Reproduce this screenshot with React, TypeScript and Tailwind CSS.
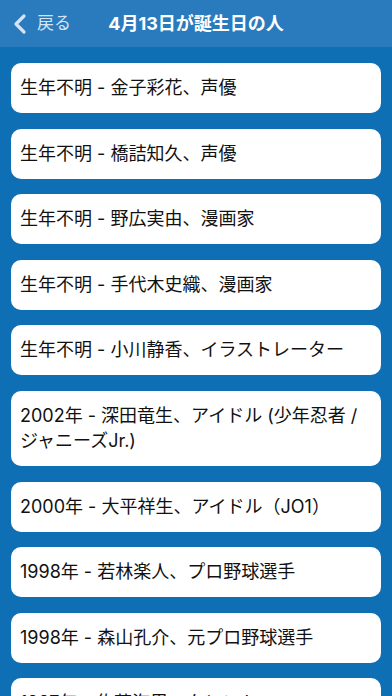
import { ChevronLeft } from 'lucide-react'

const PEOPLE = [
  ['生年不明 - 金子彩花、声優'],
  ['生年不明 - 橋詰知久、声優'],
  ['生年不明 - 野広実由、漫画家'],
  ['生年不明 - 手代木史織、漫画家'],
  ['生年不明 - 小川静香、イラストレーター'],
  ['2002年 - 深田竜生、アイドル (少年忍者 /', 'ジャニーズJr.)'],
  ['2000年 - 大平祥生、アイドル（JO1）'],
  ['1998年 - 若林楽人、プロ野球選手'],
  ['1998年 - 森山孔介、元プロ野球選手'],
  ['1997年 - 佐藤海里、タレント'],
]

export default function App() {
  return (
    <div
      className="w-[392px] h-[696px] overflow-hidden bg-[#0f6fb5] flex flex-col"
      style={{ fontFamily: 'Inter, "Noto Sans CJK JP", sans-serif' }}
    >
      {/* Nav bar */}
      <div className="h-[47px] flex-shrink-0 bg-[#2a7bbd] relative flex items-center">
        <div className="flex items-center pl-[4px] text-[#d4e4f3]">
          <ChevronLeft size={32} strokeWidth={2.4} />
          <span className="text-[17px] ml-[1px] leading-none">戻る</span>
        </div>
        <div className="absolute inset-0 flex items-center justify-center pointer-events-none">
          <span className="text-white text-[18px] font-bold leading-none">4月13日が誕生日の人</span>
        </div>
      </div>

      {/* List */}
      <div className="flex flex-col gap-[15.5px] px-[11px] pt-[16px]">
        {PEOPLE.map(lines => (
          <div
            key={lines[0]}
            className="bg-white rounded-[10px] px-[9px] py-[12.25px] text-[18px] leading-[25.5px] text-[#111] whitespace-nowrap overflow-hidden"
          >
            {lines.map((l, i) => (
              <div key={i}>{l}</div>
            ))}
          </div>
        ))}
      </div>
    </div>
  )
}
